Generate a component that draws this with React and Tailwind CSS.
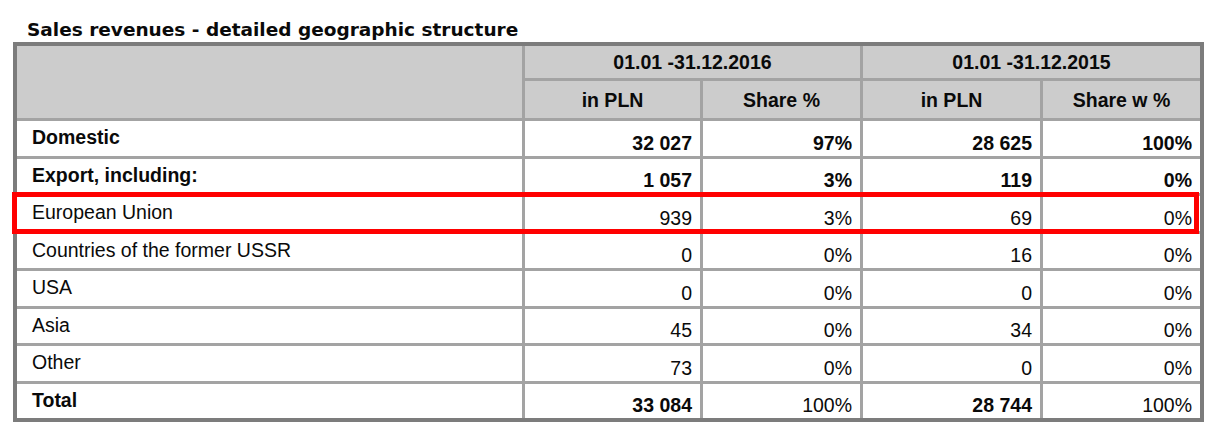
import React from 'react';

const rows = [
  { label: 'Domestic', a: '32 027', b: '97%', c: '28 625', d: '100%', bold: true },
  { label: 'Export, including:', a: '1 057', b: '3%', c: '119', d: '0%', bold: true },
  { label: 'European Union', a: '939', b: '3%', c: '69', d: '0%' },
  { label: 'Countries of the former USSR', a: '0', b: '0%', c: '16', d: '0%' },
  { label: 'USA', a: '0', b: '0%', c: '0', d: '0%' },
  { label: 'Asia', a: '45', b: '0%', c: '34', d: '0%' },
  { label: 'Other', a: '73', b: '0%', c: '0', d: '0%' },
  { label: 'Total', a: '33 084', b: '100%', c: '28 744', d: '100%', bold: true, shareRegular: true },
];

const Label = ({ children, bold }) => (
  <div className={`bg-white flex items-start pt-[5px] pl-[15px] leading-[22px] ${bold ? 'font-bold' : ''}`}>
    {children}
  </div>
);

const Num = ({ children, bold }) => (
  <div className={`bg-white flex items-end justify-end pr-2 pb-[2px] leading-[22px] ${bold ? 'font-bold' : ''}`}>
    {children}
  </div>
);

const Head = ({ children, className = '' }) => (
  <div className={`bg-[#cccccc] flex items-center justify-center font-bold leading-[22px] ${className}`}>
    {children}
  </div>
);

export default function App() {
  return (
    <div className="w-[1214px] h-[439px] bg-white pt-[19px] pl-[13px] text-[#0a0a0a] font-['Liberation_Sans',Arial,sans-serif]">
      <h1 className="ml-[14px] mb-[1px] h-[22px] leading-[22px] text-[18.5px] font-bold font-['DejaVu_Sans',Verdana,sans-serif]">
        Sales revenues - detailed geographic structure
      </h1>

      <div className="relative w-[1191px] border-4 border-[#7c7c7c] bg-[#a3a3a3] grid grid-cols-[505px_175px_157px_177px_157px] grid-rows-[32px_37px_35px_34px_35px_34px_35px_34px_35px_34px] gap-[3px] text-[19.5px]">
        <div className="row-span-2 bg-[#cccccc]" />
        <Head className="col-span-2">01.01 -31.12.2016</Head>
        <Head className="col-span-2">01.01 -31.12.2015</Head>
        <Head>in PLN</Head>
        <Head>Share %</Head>
        <Head>in PLN</Head>
        <Head>Share w %</Head>

        {rows.map((r) => (
          <React.Fragment key={r.label}>
            <Label bold={r.bold}>{r.label}</Label>
            <Num bold={r.bold}>{r.a}</Num>
            <Num bold={r.bold && !r.shareRegular}>{r.b}</Num>
            <Num bold={r.bold}>{r.c}</Num>
            <Num bold={r.bold && !r.shareRegular}>{r.d}</Num>
          </React.Fragment>
        ))}

        {/* highlight around the EU row */}
        <div className="absolute left-[-5px] top-[146px] w-[1187px] h-[42px] border-[5px] border-[#ff0000] pointer-events-none" />
      </div>
    </div>
  );
}
